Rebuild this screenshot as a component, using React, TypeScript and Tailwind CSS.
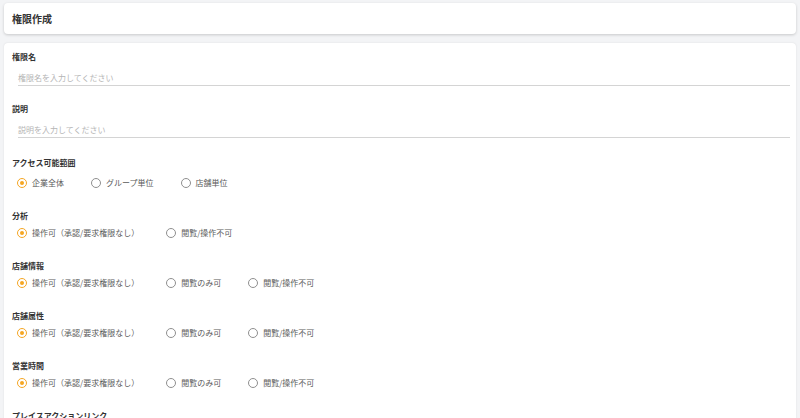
import React from "react";

const font = { fontFamily: '"Noto Sans CJK JP", "Noto Sans", sans-serif' };

type Opt = { label: string; checked?: boolean };

function Radio({ label, checked }: Opt) {
  return (
    <label className="flex items-center gap-[5px] mr-[27px] h-[14px]">
      {checked ? (
        <span className="w-[10px] h-[10px] rounded-full border-[1.5px] border-[#f5a623] flex items-center justify-center">
          <span className="w-[4px] h-[4px] rounded-full bg-[#f5a623]" />
        </span>
      ) : (
        <span className="w-[10px] h-[10px] rounded-full border border-[#8f8f8f]" />
      )}
      <span className="text-[8px] leading-[12px] text-[#5a5a5a]">{label}</span>
    </label>
  );
}

function TextField({ label, placeholder, mb }: { label: string; placeholder: string; mb: string }) {
  return (
    <div className={mb}>
      <div className="text-[8px] leading-[12px] font-bold text-[#333]">{label}</div>
      <div className="ml-[6px] mt-[7px] h-[16px] border-b border-[#d4d4d4] flex items-center">
        <span className="text-[8px] leading-[12px] text-[#b5b5b5]">{placeholder}</span>
      </div>
    </div>
  );
}

function RadioGroup({ label, options, mt = "mt-[4px]" }: { label: string; options: Opt[]; mt?: string }) {
  return (
    <div className="mb-[20px]">
      <div className="text-[8px] leading-[12px] font-bold text-[#333]">{label}</div>
      <div className={`flex items-center ml-[5px] ${mt}`}>
        {options.map((o) => (
          <Radio key={o.label} {...o} />
        ))}
      </div>
    </div>
  );
}

const three: Opt[] = [
  { label: "操作可（承認/要求権限なし）", checked: true },
  { label: "閲覧のみ可" },
  { label: "閲覧/操作不可" },
];

export default function App() {
  return (
    <div className="w-[800px] h-[418px] overflow-hidden bg-[#f3f4f6] pt-[3px] px-[4px]" style={font}>
      <div className="bg-white h-[31px] rounded-sm shadow-[0_1px_3px_rgba(0,0,0,0.18)] flex items-center px-2">
        <h1 className="text-[10px] font-bold text-[#333]">権限作成</h1>
      </div>
      <div className="mt-[9px] bg-white rounded-sm shadow-[0_0_2px_rgba(0,0,0,0.1)] pl-2 pr-[6px] pt-2 h-[500px]">
        <TextField label="権限名" placeholder="権限名を入力してください" mb="mb-[17px]" />
        <TextField label="説明" placeholder="説明を入力してください" mb="mb-[19px]" />
        <RadioGroup
          label="アクセス可能範囲"
          mt="mt-[7px]"
          options={[{ label: "企業全体", checked: true }, { label: "グループ単位" }, { label: "店舗単位" }]}
        />
        <RadioGroup
          label="分析"
          options={[{ label: "操作可（承認/要求権限なし）", checked: true }, { label: "閲覧/操作不可" }]}
        />
        <RadioGroup label="店舗情報" options={three} />
        <RadioGroup label="店舗属性" options={three} />
        <RadioGroup label="営業時間" options={three} />
        <RadioGroup label="プレイスアクションリンク" options={three} />
      </div>
    </div>
  );
}
